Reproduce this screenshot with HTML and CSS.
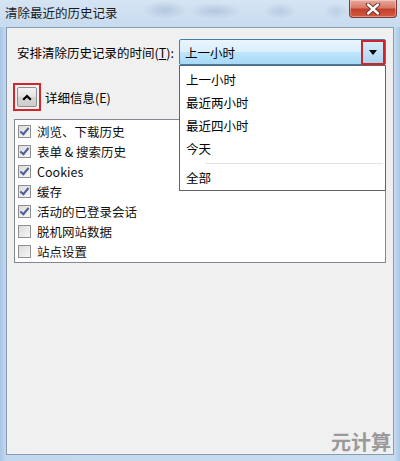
FILE: index.html
```html
<!DOCTYPE html>
<html lang="zh-CN">
<head>
<meta charset="utf-8">
<title>清除最近的历史记录</title>
<link rel="stylesheet" href="styles.css">
</head>
<body>
<div class="window">
  <div class="titlebar">
    <span class="title">清除最近的历史记录</span>
    <span class="close">
      <svg width="16" height="12" viewBox="0 0 16 12"><path d="M3 1.5 L13 10.5 M13 1.5 L3 10.5" stroke="#5a2a24" stroke-width="4.2" stroke-linecap="round"/><path d="M3 1.5 L13 10.5 M13 1.5 L3 10.5" stroke="#ffffff" stroke-width="2.4" stroke-linecap="round"/></svg>
    </span>
  </div>
  <div class="panel">
    <div class="row-time">
      <span class="label">安排清除历史记录的时间(<u>T</u>):</span>
      <div class="select">
        <span class="select-value">上一小时</span>
        <span class="select-btn"><svg width="8" height="5" viewBox="0 0 8 5"><path d="M0 0 H8 L4 5 Z" fill="#000"/></svg></span>
        <ul class="menu">
          <li>上一小时</li>
          <li>最近两小时</li>
          <li>最近四小时</li>
          <li>今天</li>
          <li class="sep"></li>
          <li>全部</li>
        </ul>
      </div>
    </div>
    <div class="row-details">
      <span class="toggle-wrap"><span class="toggle"><svg width="10" height="7" viewBox="0 0 10 7"><path d="M1.2 5.8 L5 2 L8.8 5.8" stroke="#000" stroke-width="2.2" fill="none"/></svg></span></span>
      <span class="details-label">详细信息(E)</span>
    </div>
    <div class="listbox">
      <label class="item"><span class="cb on"></span>浏览、下载历史</label>
      <label class="item"><span class="cb on"></span>表单 &amp; 搜索历史</label>
      <label class="item"><span class="cb on"></span>Cookies</label>
      <label class="item"><span class="cb on"></span>缓存</label>
      <label class="item"><span class="cb on"></span>活动的已登录会话</label>
      <label class="item"><span class="cb"></span>脱机网站数据</label>
      <label class="item"><span class="cb"></span>站点设置</label>
    </div>
    <div class="spacer"></div>
    <div class="watermark">元计算</div>
  </div>
</div>
</body>
</html>
```
FILE: styles.css
```css
html, body {
  margin: 0;
  padding: 0;
}
body {
  width: 400px;
  height: 461px;
  overflow: hidden;
  font-family: "Noto Sans CJK SC", "Noto Sans", sans-serif;
  font-size: 12px;
  color: #000;
  background: linear-gradient(90deg, #a9c6e6 0, #c3d8ee 6px, #c9dcf0 394px, #a9c6e6 400px);
}
.window {
  display: flex;
  flex-direction: column;
  height: 461px;
}
.titlebar {
  height: 27px;
  display: flex;
  justify-content: space-between;
  align-items: flex-start;
  background:
    radial-gradient(ellipse 22px 9px at 165px 10px, rgba(90,120,160,0.25), transparent),
    radial-gradient(ellipse 26px 8px at 215px 11px, rgba(90,120,160,0.25), transparent),
    radial-gradient(ellipse 16px 8px at 280px 11px, rgba(90,120,160,0.2), transparent),
    radial-gradient(ellipse 12px 8px at 336px 11px, rgba(90,120,160,0.18), transparent),
    linear-gradient(180deg, #d6e4f3 0, #c7dbef 100%);
}
.title {
  margin: 5px 0 0 5px;
  font-size: 12.5px;
  line-height: 16px;
  color: #1b1b1b;
}
.close {
  width: 48px;
  height: 18px;
  margin-right: 3px;
  box-sizing: border-box;
  border: 1px solid #7e3a30;
  border-top: none;
  border-radius: 0 0 4px 4px;
  background: linear-gradient(180deg, #e9a99c 0, #d97a68 45%, #c2412e 55%, #d45a3f 100%);
  display: flex;
  align-items: center;
  justify-content: center;
  box-shadow: inset 0 0 0 1px rgba(255,255,255,0.35);
}
.panel {
  margin: 0 6px 6px 6px;
  flex: 1;
  box-sizing: border-box;
  border: 1px solid #8a9bb0;
  background: #f0f0f0;
  padding: 11px 7px 0 7px;
  display: flex;
  flex-direction: column;
}
.row-time {
  display: flex;
  justify-content: space-between;
  align-items: center;
  height: 26px;
}
.label {
  margin-left: 3px;
  font-size: 12.5px;
  padding-top: 1px;
}
u { text-decoration: underline; }
.select {
  position: relative;
  width: 207px;
  height: 26px;
  box-sizing: border-box;
  border: 1px solid #3c7fb1;
  border-radius: 2px;
  background: linear-gradient(180deg, #eaf5fd 0, #d9effc 50%, #bee6fd 51%, #a7d9f5 100%);
  display: flex;
  align-items: center;
  justify-content: space-between;
}
.select-value {
  margin-left: 5px;
  font-size: 12.5px;
}
.select-btn {
  width: 24px;
  height: 25px;
  box-sizing: border-box;
  border: 2px solid #d0242c;
  margin-right: 0;
  margin-top: 1px;
  display: flex;
  align-items: center;
  justify-content: center;
  background: linear-gradient(180deg, #d6ecfa 0, #a9d6f2 100%);
}
.menu {
  position: absolute;
  left: -1px;
  top: 25px;
  width: 207px;
  height: 126px;
  box-sizing: border-box;
  margin: 0;
  padding: 2px 0 0 0;
  list-style: none;
  background: #fff;
  border: 1px solid #646464;
  z-index: 2;
}
.menu li {
  height: 23px;
  line-height: 23px;
  padding-left: 6px;
  font-size: 12.5px;
}
.menu li.sep {
  height: 1px;
  margin: 3px 2px 2px 26px;
  padding: 0;
  background: #e2e3e3;
}
.row-details {
  display: flex;
  align-items: center;
  margin-top: 18px;
  height: 28px;
}
.toggle-wrap {
  margin-left: -1px;
  width: 28px;
  height: 28px;
  box-sizing: border-box;
  border: 2px solid #d3262c;
  display: flex;
  align-items: center;
  justify-content: center;
  background: #f0f0f0;
}
.toggle {
  width: 20px;
  height: 20px;
  box-sizing: border-box;
  border: 1px solid #8e8f8f;
  border-radius: 2px;
  background: linear-gradient(180deg, #f4f4f4 0, #e2e2e2 50%, #d4d4d4 51%, #cfcfcf 100%);
  display: flex;
  align-items: center;
  justify-content: center;
}
.details-label {
  margin-left: 4px;
  font-size: 12.5px;
}
.listbox {
  margin-top: 8px;
  box-sizing: border-box;
  border: 1px solid #828790;
  background: #fff;
  padding: 1px 0 1px 3px;
  display: flex;
  flex-direction: column;
}
.item {
  height: 20px;
  display: flex;
  align-items: center;
  font-size: 12.5px;
  color: #111;
}
.cb {
  width: 13px;
  height: 13px;
  box-sizing: border-box;
  border: 1px solid #8f8f8f;
  background: linear-gradient(135deg, #dcdcdc 0, #f6f6f6 100%);
  margin-right: 6px;
  flex: none;
  position: relative;
}
.cb.on::after {
  content: "";
  position: absolute;
  left: 3px;
  top: 0px;
  width: 3px;
  height: 7px;
  border: solid #4a5f97;
  border-width: 0 2px 2px 0;
  transform: rotate(40deg);
}
.spacer {
  flex: 1;
}
.watermark {
  align-self: flex-end;
  margin: 0 -5px 1px 0;
  font-size: 20px;
  font-weight: 700;
  color: #999;
  letter-spacing: 0;
  line-height: 22px;
}
```
